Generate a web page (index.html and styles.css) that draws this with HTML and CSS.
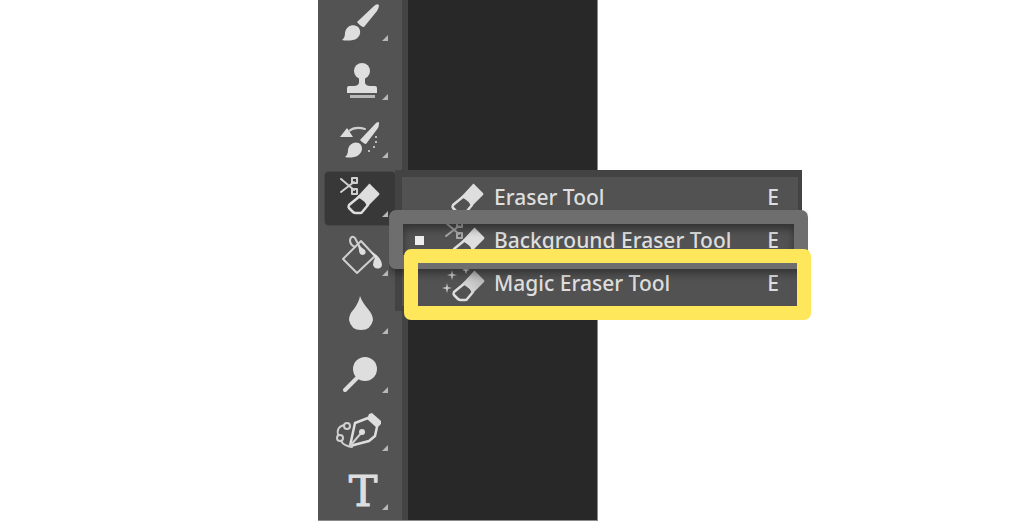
FILE: index.html
```html
<!DOCTYPE html>
<html lang="en">
<head>
    <meta charset="UTF-8">
    <meta name="viewport" content="width=device-width, initial-scale=1.0">
    <title>Eraser tools</title>
    <link rel="stylesheet" href="styles.css">
</head>
<body>

<!-- Shapes shared by the toolbar and the menu -->
<svg class="shapes" aria-hidden="true">
    <symbol id="eraser" viewBox="0 0 68 58" overflow="visible">
        <path class="line" d="M34 27 L23 36 Q22 38 23 39 L27 43 Q28 44 30 44 H34 Q36 44 37 42 L42 36"/>
        <path d="M44 15 L53 24 Q54 25 53 26 L41 38 Q40 32 31 28 L43 15 Q43 14 44 15Z"/>
    </symbol>
    <symbol id="scissors" viewBox="0 0 68 58" overflow="visible">
        <path class="thin" d="M15 10 L28 21 M15 23 L28 13"/>
        <path class="thin" d="M26 9h5v5h-5z M26 20h5v5h-5z"/>
    </symbol>
    <symbol id="corner" viewBox="0 0 68 58">
        <path class="corner" d="M56 48 L62 42 V48Z"/>
    </symbol>
    <linearGradient id="fade" x1="1" y1="0" x2="0" y2="1">
        <stop offset="0" stop-color="#a8a8a8"/>
        <stop offset="1" stop-color="#e4e4e4"/>
    </linearGradient>
</svg>

<main class="editor">
    <ul class="toolbar">
        <li>
            <button class="tool" aria-label="Brush">
                <svg viewBox="0 0 68 58">
                    <path d="M48 13 Q51 10 53 12 Q53 15 51 18 L38 34 Q35 34 31 29Z"/>
                    <path d="M16 47 Q19 45 19 40 C20 32 29 30 33 35 C36 40 33 46 27 47 Q21 48 16 47Z"/>
                    <use href="#corner" width="68" height="58"/>
                </svg>
            </button>
        </li>
        <li>
            <button class="tool" aria-label="Clone stamp">
                <svg viewBox="0 0 68 58">
                    <circle cx="36" cy="19" r="8"/>
                    <path d="M33 24 H39 V31 Q40 34 44 34 H49 Q51 34 51 36 V41 H21 V36 Q21 34 23 34 H28 Q32 34 33 31Z"/>
                    <rect class="soft" x="24" y="43" width="25" height="3"/>
                    <use href="#corner" width="68" height="58"/>
                </svg>
            </button>
        </li>
        <li>
            <button class="tool" aria-label="History brush">
                <svg viewBox="0 0 68 58">
                    <path d="M50 13 Q53 11 53 13 Q53 16 52 18 L40 34 Q38 34 34 30Z"/>
                    <path d="M19 47 Q22 45 22 40 C23 33 31 30 35 35 C38 40 34 46 28 47 Q23 48 19 47Z"/>
                    <path d="M14 27 L21 18 L27 27Z"/>
                    <path class="thin" d="M23 21 Q29 16 39 19"/>
                    <circle cx="50" cy="27" r="1"/>
                    <circle cx="50" cy="32" r="1"/>
                    <circle cx="48" cy="37" r="1"/>
                    <circle cx="43" cy="41" r="1"/>
                    <use href="#corner" width="68" height="58"/>
                </svg>
            </button>
        </li>
        <li class="has-menu">
            <button class="tool active" aria-label="Eraser" aria-expanded="true">
                <svg viewBox="0 0 68 58">
                    <use href="#scissors" width="68" height="58"/>
                    <use href="#eraser" width="68" height="58"/>
                    <use href="#corner" width="68" height="58"/>
                </svg>
            </button>

            <div class="menu">
                <button class="item">
                    <span class="mark"></span>
                    <svg viewBox="0 0 46 43">
                        <use href="#eraser" x="-10" y="-7" width="68" height="58"/>
                    </svg>
                    <span class="name">Eraser Tool</span>
                    <span class="key">E</span>
                </button>
                <button class="item boxed-grey">
                    <span class="mark on"></span>
                    <svg viewBox="0 0 46 43">
                        <use class="dim" href="#scissors" x="-9" y="-6" width="68" height="58"/>
                        <use href="#eraser" x="-9" y="-6" width="68" height="58"/>
                    </svg>
                    <span class="name">Background Eraser Tool</span>
                    <span class="key">E</span>
                </button>
                <button class="item boxed-yellow">
                    <span class="mark"></span>
                    <svg class="magic" viewBox="0 0 46 43">
                        <path d="M12 8 L13 12 L17 13 L13 14 L12 18 L11 14 L7 13 L11 12Z"/>
                        <path d="M7 21 L8 25 L12 26 L8 27 L7 31 L6 27 L2 26 L6 25Z"/>
                        <path d="M26 4 L27 7 L30 8 L27 9 L26 12 L25 9 L22 8 L25 7Z"/>
                        <use href="#eraser" x="-9" y="-6" width="68" height="58"/>
                    </svg>
                    <span class="name">Magic Eraser Tool</span>
                    <span class="key">E</span>
                </button>
            </div>
        </li>
        <li>
            <button class="tool" aria-label="Paint bucket">
                <svg viewBox="0 0 68 58">
                    <path class="thin" d="M35 13 L17 31 L31 45 L49 28Z"/>
                    <path class="thin" d="M29 19 Q24 17 24 12 Q25 7 29 10 Q31 14 36 23"/>
                    <path d="M32 17 L39 22 Q41 26 37 27 Q33 27 33 22Z"/>
                    <path d="M44 23 Q51 26 54 31 Q58 38 54 40 Q49 42 47 37 Q47 33 49 30Z"/>
                    <use href="#corner" width="68" height="58"/>
                </svg>
            </button>
        </li>
        <li>
            <button class="tool" aria-label="Blur">
                <svg viewBox="0 0 68 58">
                    <path d="M34 10 Q36 16 42 23 Q47 29 47 34 Q45 44 35 44 Q25 44 23 34 Q23 28 28 23 Q33 16 34 10Z"/>
                    <use href="#corner" width="68" height="58"/>
                </svg>
            </button>
        </li>
        <li>
            <button class="tool" aria-label="Dodge">
                <svg viewBox="0 0 68 58">
                    <circle cx="39" cy="24" r="12"/>
                    <path class="thick" d="M19 45 L32 32"/>
                    <use href="#corner" width="68" height="58"/>
                </svg>
            </button>
        </li>
        <li>
            <button class="tool" aria-label="Curvature pen">
                <svg viewBox="0 0 68 58">
                    <path d="M41 16 L43 11 L46 10 L55 18 L55 21 L51 25Z"/>
                    <path class="line" d="M42 15 L29 20 L24 43 L43 38 L49 33 L51 24"/>
                    <path class="thin" d="M24 43 L36 29"/>
                    <circle cx="36" cy="29" r="3"/>
                    <circle class="thin" cx="21" cy="23" r="3"/>
                    <circle class="thin" cx="14" cy="35" r="3"/>
                    <path class="thin" d="M18 22 Q10 24 12 32 M15 38 Q18 43 26 44"/>
                    <use href="#corner" width="68" height="58"/>
                </svg>
            </button>
        </li>
        <li>
            <button class="tool" aria-label="Type">
                <svg viewBox="0 0 68 58">
                    <text class="letter" x="37" y="44">T</text>
                    <use href="#corner" width="68" height="58"/>
                </svg>
            </button>
        </li>
    </ul>
    <div class="canvas"></div>
</main>

</body>
</html>
```
FILE: styles.css
```css
body {
    margin: 0;
    background-color: white;
    font-family: "Noto Sans", sans-serif;
    overflow: hidden;
}
.shapes {
    position: absolute;
    width: 0;
    height: 0;
}
.editor {
    display: flex;
    box-sizing: border-box;
    width: 280px;
    height: calc(100vh - 7px);
    margin-left: 31%;
    border-right: 1px solid #8a8a8a;
    border-bottom: 1px solid #8a8a8a;
    background-color: #535353;
}
/* the strip is scrolled a little, so the first tool is cut by the window */
.toolbar {
    display: flex;
    flex-direction: column;
    width: 70px;
    margin: -7px 0 0;
    padding: 0 7px;
    list-style: none;
}
.toolbar li {
    display: flex;
    flex: 1;
    min-height: 0;
}
.canvas {
    flex: 1;
    border-left: 6px solid #444;
    background-color: #282828;
}
button {
    margin: 0;
    padding: 0;
    border: 0;
    background: none;
    color: #dedede;
    font: inherit;
}
svg {
    display: block;
    fill: #dedede;
}
.tool {
    display: flex;
    align-items: center;
    justify-content: center;
    width: 70px;
}
.tool svg {
    width: 68px;
    height: 58px;
}
.tool.active {
    margin: 3px 0 2px;
    border-radius: 4px;
    background-color: #383838;
    box-shadow: 0 0 0 1px #474747;
}
.line, .thin, .thick {
    fill: none;
    stroke: #dedede;
    stroke-width: 2.5;
    stroke-linejoin: round;
    stroke-linecap: round;
}
.thin {
    stroke: #cfcfcf;
    stroke-width: 2;
}
.thick {
    stroke-width: 4;
}
.soft, .corner {
    fill: #b8b8b8;
}
.dim {
    opacity: 0.7;
}
.magic {
    fill: url(#fade);
}
.letter {
    font-family: "DejaVu Serif", serif;
    font-size: 43px;
    text-anchor: middle;
    stroke: #dedede;
    stroke-width: 1;
}

/* Flyout menu */
.has-menu {
    position: relative;
}
.menu {
    position: absolute;
    top: 1px;
    left: 70px;
    box-sizing: border-box;
    width: 407px;
    border: solid #434343;
    border-width: 7px 4px 5px 7px;
    background-color: #525252;
}
.item {
    position: relative;
    display: flex;
    align-items: center;
    width: 100%;
    height: 43px;
    padding: 0 19px 2px 13px;
    font-size: 21px;
    font-weight: 500;
    line-height: 28px;
    text-align: left;
}
.item svg {
    width: 46px;
    height: 43px;
    margin: 0 8px 0 16px;
}
.mark {
    width: 9px;
    height: 9px;
}
.mark.on {
    background-color: #eee;
}
.name {
    flex: 1;
}

/* Frames drawn over the rows */
.boxed-grey::after, .boxed-yellow::after {
    content: "";
    position: absolute;
    border: 14px solid #6e6e6e;
    border-radius: 7px;
}
.boxed-grey::after {
    inset: -10px -10px -6px -13px;
    z-index: 1;
    box-shadow: inset 0 5px 8px rgba(0, 0, 0, 0.4), 0 4px 8px rgba(0, 0, 0, 0.4);
    clip-path: inset(0 0 -14px 0);
}
.boxed-yellow::after {
    inset: -14px -13px -14px 2px;
    z-index: 2;
    border-color: #ffe75c;
}
```
